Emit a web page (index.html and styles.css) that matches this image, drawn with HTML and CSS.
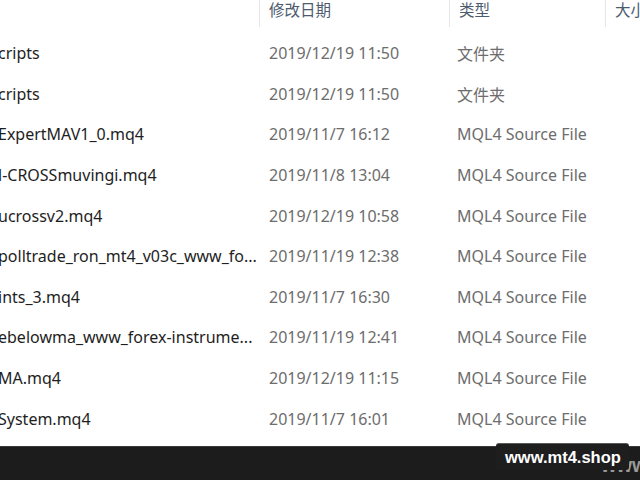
FILE: index.html
```html
<!DOCTYPE html>
<html>
<head>
<meta charset="utf-8">
<link rel="stylesheet" href="styles.css">
</head>
<body>
<div class="explorer">
  <div class="header">
    <div class="hcell hname"></div>
    <div class="hcell hdate">修改日期</div>
    <div class="hcell htype">类型</div>
    <div class="hcell hsize">大小</div>
  </div>
  <div class="rows">
    <div class="row"><span class="name">cripts</span><span class="date">2019/12/19 11:50</span><span class="type">文件夹</span><span class="size"></span></div>
    <div class="row"><span class="name">cripts</span><span class="date">2019/12/19 11:50</span><span class="type">文件夹</span><span class="size"></span></div>
    <div class="row"><span class="name">ExpertMAV1_0.mq4</span><span class="date">2019/11/7 16:12</span><span class="type">MQL4 Source File</span><span class="size"></span></div>
    <div class="row"><span class="name">l-CROSSmuvingi.mq4</span><span class="date">2019/11/8 13:04</span><span class="type">MQL4 Source File</span><span class="size"></span></div>
    <div class="row"><span class="name">ucrossv2.mq4</span><span class="date">2019/12/19 10:58</span><span class="type">MQL4 Source File</span><span class="size"></span></div>
    <div class="row"><span class="name">polltrade_ron_mt4_v03c_www_fo...</span><span class="date">2019/11/19 12:38</span><span class="type">MQL4 Source File</span><span class="size"></span></div>
    <div class="row"><span class="name">ints_3.mq4</span><span class="date">2019/11/7 16:30</span><span class="type">MQL4 Source File</span><span class="size"></span></div>
    <div class="row"><span class="name">ebelowma_www_forex-instrume...</span><span class="date">2019/11/19 12:41</span><span class="type">MQL4 Source File</span><span class="size"></span></div>
    <div class="row"><span class="name">MA.mq4</span><span class="date">2019/12/19 11:15</span><span class="type">MQL4 Source File</span><span class="size"></span></div>
    <div class="row"><span class="name">System.mq4</span><span class="date">2019/11/7 16:01</span><span class="type">MQL4 Source File</span><span class="size"></span></div>
  </div>
  <div class="footer">
    <span class="ghost">www.</span>
    <span class="mark">www.mt4.shop</span>
  </div>
</div>
</body>
</html>
```

FILE: styles.css
```css
html, body {
  margin: 0;
  padding: 0;
  background: #ffffff;
}
body {
  width: 640px;
  height: 480px;
  overflow: hidden;
  font-family: "Noto Sans", "Noto Sans CJK SC", sans-serif;
}
.explorer {
  display: flex;
  flex-direction: column;
  height: 480px;
}
.header {
  display: grid;
  grid-template-columns: 259px 190px 156px 1fr;
  height: 27px;
  flex: none;
}
.hcell {
  font-size: 15.5px;
  color: #4d5b6e;
  padding-left: 9px;
  line-height: 20px;
  white-space: nowrap;
  overflow: hidden;
}
.hdate, .htype, .hsize {
  border-left: 1px solid #e6e6e6;
}
.rows {
  flex: 1;
  padding-top: 7px;
}
.row {
  display: grid;
  grid-template-columns: 259px 190px 156px 1fr;
  height: 40.6px;
  align-items: center;
  font-size: 16px;
  white-space: nowrap;
}
.row span {
  overflow: hidden;
  position: relative;
  top: -1px;
}
.name {
  color: #1e1e1e;
  margin-left: -2px;
}
.date, .type {
  color: #6d6d6d;
  padding-left: 10px;
}
.type {
  padding-left: 8px;
}
.footer {
  flex: none;
  height: 33px;
  background: #1c1c1c;
  border-top: 1px solid #3a3a3a;
  position: relative;
}
.ghost {
  position: absolute;
  left: 601px;
  top: 7px;
  font-family: "Liberation Sans", sans-serif;
  font-weight: bold;
  font-size: 20px;
  color: #9a9a9a;
}
.mark {
  position: absolute;
  left: 496px;
  top: -4px;
  width: 133px;
  height: 27px;
  box-sizing: border-box;
  background: #1e1e1e;
  border-top: 1px solid #5a5a5a;
  border-radius: 3px;
  color: #ffffff;
  font-family: "Liberation Sans", sans-serif;
  font-weight: bold;
  font-size: 16.5px;
  line-height: 26px;
  padding-left: 9px;
}
```
